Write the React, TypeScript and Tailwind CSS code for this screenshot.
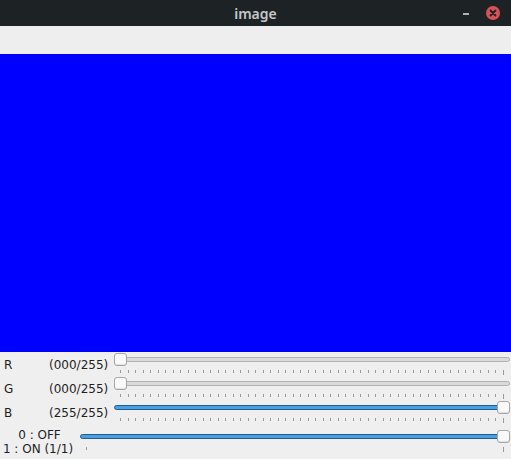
import React from "react";

function Ticks({ count, className }: { count: number; className?: string }) {
  const arr = Array.from({ length: count });
  return (
    <div className={"flex justify-between px-[6px] " + (className ?? "")}>
      {arr.map((_, i) => (
        <div
          key={i}
          className={
            "w-px bg-[#9a9a9a] " + (i === count - 1 ? "h-[5px]" : "h-[3px]")
          }
        />
      ))}
    </div>
  );
}

function Slider({
  full,
  ticks,
  className,
}: {
  full: boolean;
  ticks: number;
  className?: string;
}) {
  return (
    <div className={"flex flex-col " + (className ?? "")}>
      <div className="relative h-[13px]">
        <div
          className={
            "absolute left-0 right-0 top-[4px] h-[5px] rounded-[3px] border " +
            (full
              ? "border-[#1f5d92] bg-[#4a9fe2]"
              : "border-[#b2b2b2] bg-[#dadada]")
          }
        />
        <div
          className={
            "absolute top-0 h-[13px] w-[13px] rounded-[3px] border border-[#a6a6a6] bg-[#f9f9f9] shadow-[inset_0_-1px_0_#e2e2e2] " +
            (full ? "right-0" : "left-0")
          }
        />
      </div>
      <Ticks count={ticks} className="mt-[4px]" />
    </div>
  );
}

function Row({ label, value, full }: { label: string; value: string; full: boolean }) {
  return (
    <div className="flex h-[24px] items-center">
      <div className="w-[49px] pl-[4px]">{label}</div>
      <div className="w-[65px]">{value}</div>
      <Slider full={full} ticks={52} className="w-[396px] self-start" />
    </div>
  );
}

export default function App() {
  return (
    <div
      className="flex h-[459px] w-[511px] flex-col overflow-hidden bg-[#efefef] text-[12px] text-[#1e1e1e]"
      style={{ fontFamily: '"DejaVu Sans", sans-serif' }}
    >
      <div className="relative flex h-[26px] items-center justify-center bg-[#1d2225]">
        <span
          className="text-[14px] font-semibold text-[#c4c8c8]"
          style={{ fontFamily: '"Noto Sans", sans-serif' }}
        >
          image
        </span>
        <div className="absolute right-[11px] top-0 flex h-[26px] items-center gap-[17px]">
          <div className="mt-[1px] h-[2px] w-[6px] bg-[#aeb2b2]" />
          <div className="flex h-[14px] w-[14px] items-center justify-center rounded-full bg-[#d8525a]">
            <svg width="8" height="8" viewBox="0 0 8 8">
              <path d="M1.5 1.5 L6.5 6.5 M6.5 1.5 L1.5 6.5" stroke="#1d2225" strokeWidth="1.8" strokeLinecap="round" />
            </svg>
          </div>
        </div>
      </div>
      <div className="h-[28px] bg-[#eeeeee]" />
      <div className="h-[298px] bg-[#0000ff]" />
      <div className="flex flex-col pt-[1px]">
        <Row label="R" value="(000/255)" full={false} />
        <Row label="G" value="(000/255)" full={false} />
        <Row label="B" value="(255/255)" full={true} />
        <div className="flex h-[34px]">
          <div className="flex w-[76px] flex-col items-center pt-[3px] leading-[14px]">
            <span className="pl-[3px]">0 : OFF</span>
            <span>1 : ON (1/1)</span>
          </div>
          <Slider full={true} ticks={2} className="ml-[4px] mt-[5px] w-[430px]" />
        </div>
      </div>
    </div>
  );
}
